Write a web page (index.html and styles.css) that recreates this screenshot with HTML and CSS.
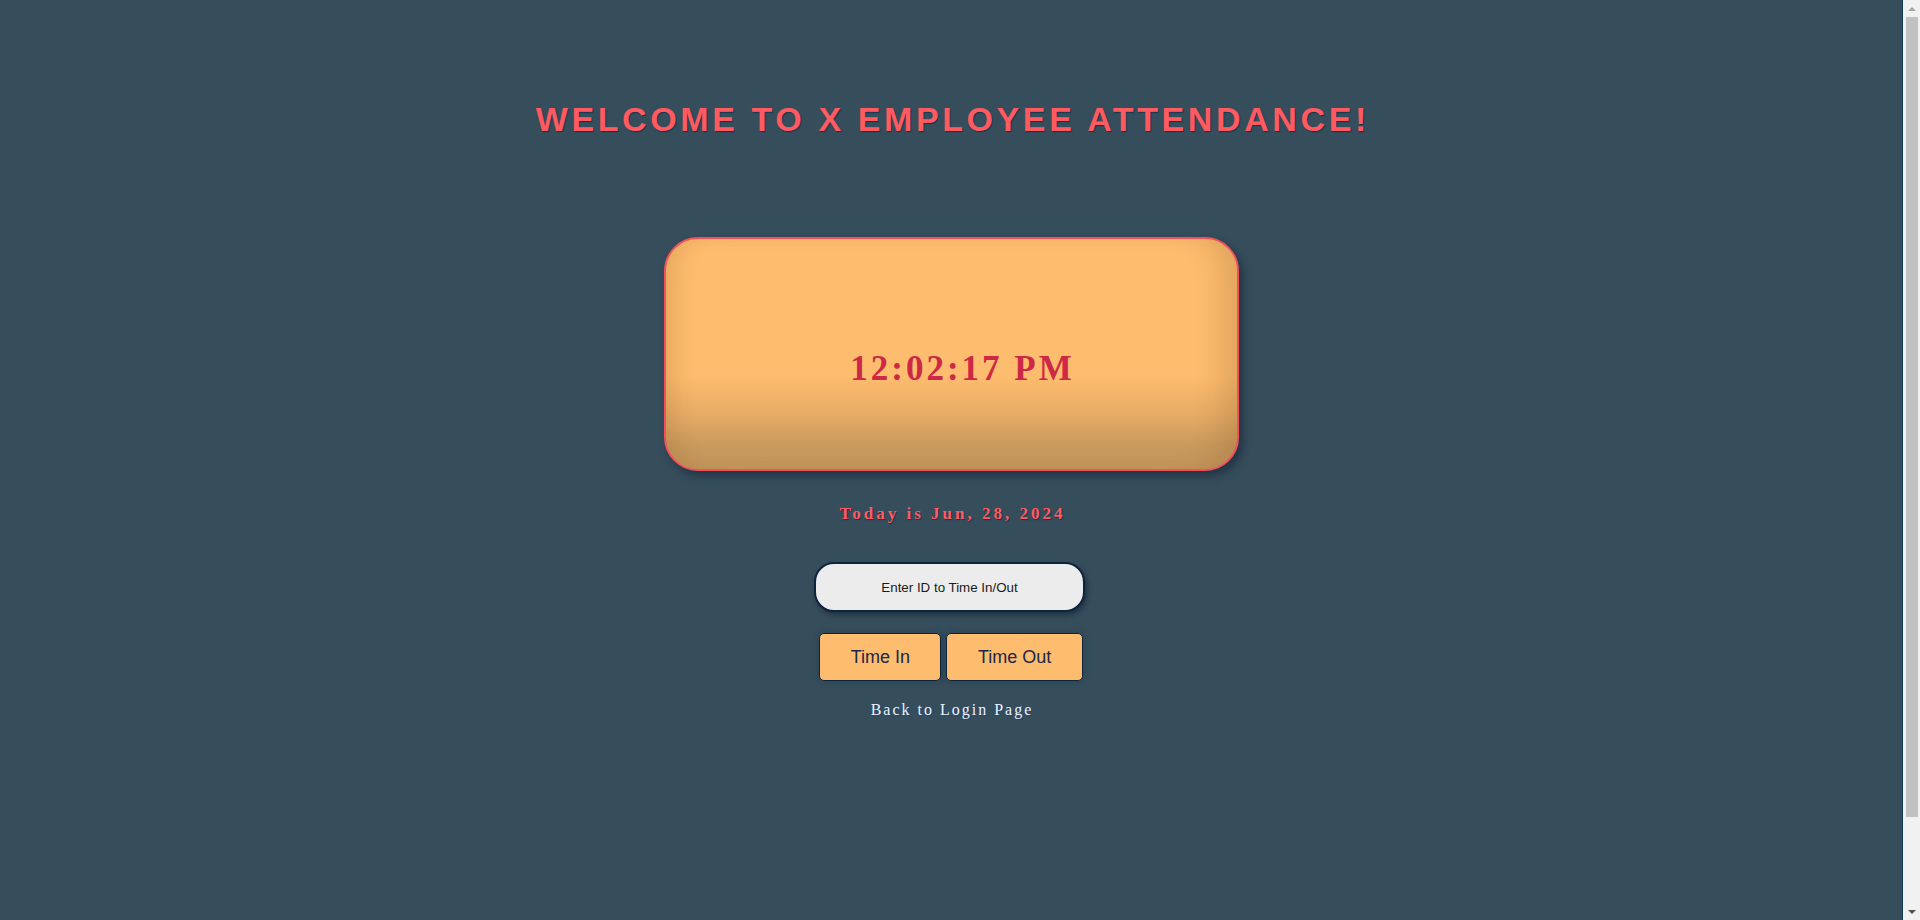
FILE: index.html
```html
<!DOCTYPE html>
<html lang="en">
<head>
<meta charset="utf-8">
<title>X Employee Attendance</title>
<link rel="stylesheet" href="styles.css">
</head>
<body>
<main class="page">
  <h1 class="title">WELCOME TO X EMPLOYEE ATTENDANCE!</h1>
  <div class="clock">
    <span class="clock-time">12:02:17 PM</span>
  </div>
  <p class="date">Today is Jun, 28, 2024</p>
  <form class="attend-form">
    <input class="id-input" type="text" placeholder="Enter ID to Time In/Out">
    <div class="btn-row">
      <button type="button" class="btn btn-in">Time In</button>
      <button type="button" class="btn btn-out">Time Out</button>
    </div>
  </form>
  <a class="back-link" href="#">Back to Login Page</a>
</main>
<div class="scrollbar" aria-hidden="true">
  <span class="sb-arrow sb-up"></span>
  <span class="sb-track"><span class="sb-thumb"></span></span>
  <span class="sb-arrow sb-down"></span>
</div>
</body>
</html>
```

FILE: styles.css
```css
html, body {
  margin: 0;
  padding: 0;
}

body {
  background: #364d5c;
  height: 920px;
  display: flex;
  overflow: hidden;
}

.page {
  flex: 1;
  display: flex;
  flex-direction: column;
  align-items: center;
  padding-top: 100px;
}

.title {
  margin: 0;
  font-family: "Liberation Sans", Arial, sans-serif;
  font-weight: bold;
  font-size: 34px;
  line-height: 39px;
  letter-spacing: 3.6px;
  padding-left: 3.6px;
  color: #ff5a5f;
  text-shadow: 1px 1px 1px #0f3550;
}

.clock {
  box-sizing: border-box;
  margin-top: 98px;
  width: 575px;
  height: 234px;
  border: 2px solid #f4505a;
  border-radius: 34px;
  display: flex;
  align-items: center;
  justify-content: center;
  padding-top: 29px;
  padding-left: 20px;
  background: linear-gradient(to bottom, #fdbc6e 0%, #fdbc6e 60%, #e9ad66 75%, #c8995e 90%, #c4965b 100%);
  box-shadow:
    4px 5px 9px rgba(10, 25, 40, 0.45),
    inset 22px 0 22px -14px rgba(120, 80, 30, 0.18),
    inset -30px 0 28px -16px rgba(120, 80, 30, 0.22);
}

.clock-time {
  font-family: "Liberation Serif", "Times New Roman", serif;
  font-weight: bold;
  font-size: 35px;
  line-height: 40px;
  letter-spacing: 3px;
  padding-left: 3px;
  color: #cd2846;
}

.date {
  margin: 33px 0 0;
  font-family: "Liberation Serif", "Times New Roman", serif;
  font-weight: bold;
  font-size: 17px;
  line-height: 20px;
  letter-spacing: 3px;
  padding-left: 3px;
  color: #ff5a5f;
  text-shadow: 1px 1px 1px #0f3550;
}

.attend-form {
  margin-top: 38px;
  display: flex;
  flex-direction: column;
  align-items: center;
}

.id-input {
  box-sizing: border-box;
  width: 271px;
  height: 50px;
  margin-left: -3px;
  border: 2px solid #0c2440;
  border-radius: 20px;
  background: #ececec;
  font-family: "Liberation Sans", Arial, sans-serif;
  font-size: 13.33px;
  color: #111;
  text-align: center;
  box-shadow: 2px 3px 5px rgba(5, 20, 35, 0.45);
  outline: none;
}

.id-input::placeholder {
  color: #1a1a1a;
  opacity: 1;
}

.btn-row {
  margin-top: 21px;
  display: flex;
  gap: 5px;
}

.btn {
  box-sizing: border-box;
  height: 48px;
  padding: 0 30.5px;
  border: 1px solid #0c2440;
  border-radius: 5px;
  background: #fdbc6e;
  font-family: "Liberation Sans", Arial, sans-serif;
  font-size: 18px;
  color: #1c2748;
  box-shadow: 0 0 6px rgba(20, 40, 60, 0.35);
  cursor: pointer;
}

.back-link {
  margin-top: 20px;
  font-family: "Liberation Serif", "Times New Roman", serif;
  font-size: 16px;
  line-height: 18px;
  letter-spacing: 2px;
  padding-left: 2px;
  color: #eef3ff;
  text-decoration: none;
  text-shadow: 1px 1px 1px #1f4470;
}

/* browser-style vertical scrollbar strip */
.scrollbar {
  width: 17px;
  flex: none;
  background: #f1f1f1;
  border-left: 1px solid #0d3a52;
  display: flex;
  flex-direction: column;
  align-items: center;
}

.sb-arrow {
  height: 17px;
  width: 100%;
  display: flex;
  align-items: center;
  justify-content: center;
  flex: none;
}

.sb-arrow::before {
  content: "";
  width: 0;
  height: 0;
  border-left: 4px solid transparent;
  border-right: 4px solid transparent;
}

.sb-up::before {
  border-bottom: 4px solid #a3a3a3;
}

.sb-down::before {
  border-top: 4px solid #505050;
}

.sb-track {
  flex: 1;
  width: 100%;
  display: flex;
  flex-direction: column;
  align-items: center;
}

.sb-thumb {
  width: 12px;
  height: 800px;
  margin-left: 1px;
  background: #c1c1c1;
}
```
